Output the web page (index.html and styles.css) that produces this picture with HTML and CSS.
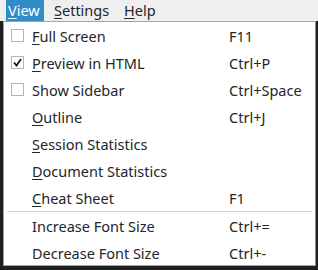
FILE: index.html
```html
<!DOCTYPE html>
<html lang="en">
<head>
    <meta charset="UTF-8">
    <title>View menu</title>
    <link rel="stylesheet" href="styles.css">
</head>
<body>
    <div class="menubar">
        <span class="top active"><u>V</u>iew</span>
        <span class="top settings"><u>S</u>ettings</span>
        <span class="top help"><u>H</u>elp</span>
    </div>
    <div class="popup">
        <div class="item"><span class="box"></span><span class="label"><u>F</u>ull Screen</span><span class="key">F11</span></div>
        <div class="item"><span class="box checked"><svg width="13" height="13" viewBox="0 0 13 13"><path d="M3 6.5 L5.5 9.5 L10 3" fill="none" stroke="#111" stroke-width="1.7"/></svg></span><span class="label"><u>P</u>review in HTML</span><span class="key">Ctrl+P</span></div>
        <div class="item"><span class="box"></span><span class="label">Show Sidebar</span><span class="key">Ctrl+Space</span></div>
        <div class="item"><span></span><span class="label"><u>O</u>utline</span><span class="key">Ctrl+J</span></div>
        <div class="item"><span></span><span class="label"><u>S</u>ession Statistics</span><span class="key"></span></div>
        <div class="item"><span></span><span class="label"><u>D</u>ocument Statistics</span><span class="key"></span></div>
        <div class="item"><span></span><span class="label"><u>C</u>heat Sheet</span><span class="key">F1</span></div>
        <div class="sep"></div>
        <div class="item"><span></span><span class="label">Increase Font Size</span><span class="key">Ctrl+=</span></div>
        <div class="item"><span></span><span class="label">Decrease Font Size</span><span class="key">Ctrl+-</span></div>
    </div>
</body>
</html>
```

FILE: styles.css
```css
*{
    margin: 0px;
    padding: 0px;
    box-sizing: border-box;
    font-family: 'Noto Sans', 'DejaVu Sans', sans-serif;
}
body{
    background-color: #1e1f21;
    width: 318px;
    height: 270px;
    overflow: hidden;
    font-size: 14.5px;
    color: #232629;
}
u{
    text-decoration-thickness: 1px;
    text-underline-offset: 2px;
}
.menubar{
    display: flex;
    height: 21px;
    background-color: #efefef;
    padding-left: 6px;
}
.top{
    line-height: 21px;
}
.top.active{
    width: 38px;
    padding-left: 2px;
    background-color: #308cc6;
    color: white;
}
.top.settings{
    width: 74px;
    padding-left: 10px;
}
.top.help{
    padding-left: 6px;
}
.popup{
    margin-left: 3px;
    width: 313px;
    height: 245px;
    background-color: white;
    border: 1px solid #a3a3a3;
    border-right-color: #8f8f8f;
}
.item{
    display: grid;
    grid-template-columns: 28px 197px 1fr;
    align-items: center;
    height: 27px;
}
.box{
    width: 13px;
    height: 13px;
    margin-left: 7px;
    border: 1px solid #b4b4b4;
    background-color: white;
    display: flex;
}
.box svg{
    margin: -1px;
}
.label, .key{
    white-space: nowrap;
}
.sep{
    height: 1px;
    margin: 0px 3px;
    background-color: #d4d4d4;
}
```
